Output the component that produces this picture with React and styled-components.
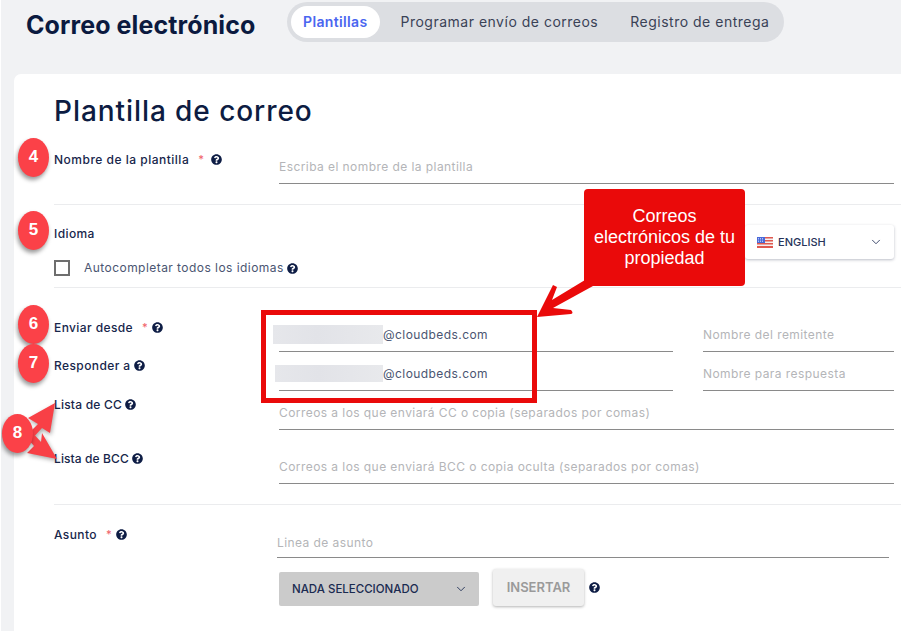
import React from "react";
import styled, { createGlobalStyle } from "styled-components";
import { FaQuestionCircle } from "react-icons/fa";
import { ChevronDown } from "lucide-react";

const GlobalStyle = createGlobalStyle`
  html, body {
    margin: 0;
    padding: 0;
    height: 631px;
    overflow: hidden;
    background: #f1f2f4;
    font-family: Inter, "Liberation Sans", sans-serif;
  }
`;

const Page = styled.div`
  position: relative;
  width: 901px;
  height: 631px;
  overflow: hidden;
  border-left: 1px solid #fff;
  box-sizing: border-box;
`;

const Header = styled.header`
  display: flex;
  align-items: flex-start;
  height: 74px;
  padding-left: 25px;
`;

const PageTitle = styled.h1`
  margin: 9px 31px 0 0;
  width: 230px;
  font-size: 25px;
  line-height: 32px;
  font-weight: 700;
  letter-spacing: 0.1px;
  color: #0b1a3f;
  white-space: nowrap;
`;

const Tabs = styled.nav`
  display: flex;
  align-items: center;
  height: 40px;
  margin-top: 2px;
  padding: 0 15px 0 4px;
  border-radius: 20px;
  background: #dcdee2;
`;

const Tab = styled.span`
  height: 32px;
  line-height: 31px;
  padding: ${(p) => (p.$active ? "0 13px 0 12px" : "0")};
  margin-left: ${(p) => p.$gap || 0}px;
  border-radius: 16px;
  font-size: 14px;
  letter-spacing: ${(p) => (p.$active ? "0.35px" : "0.5px")};
  font-weight: ${(p) => (p.$active ? 600 : 400)};
  color: ${(p) => (p.$active ? "#4a66f0" : "#3a4256")};
  background: ${(p) => (p.$active ? "#fff" : "transparent")};
  white-space: nowrap;
`;

const Card = styled.main`
  margin-left: 13px;
  height: 557px;
  padding: 17px 0 0 40px;
  box-sizing: border-box;
  background: #fff;
  border-top-left-radius: 7px;
`;

const Heading = styled.h2`
  margin: 0;
  font-size: 28px;
  line-height: 40px;
  font-weight: 500;
  color: #0d1c42;
  letter-spacing: 0.93px;
`;

const Section = styled.section`
  height: ${(p) => p.$height}px;
  padding-top: ${(p) => p.$top}px;
  box-sizing: border-box;
  border-bottom: ${(p) => (p.$last ? "none" : "1px solid #ebecee")};
`;

const Row = styled.div`
  display: grid;
  grid-template-columns: 225px 1fr;
  margin-bottom: ${(p) => p.$after || 0}px;
  padding-right: 7px;
`;

const Label = styled.label`
  display: flex;
  align-items: center;
  height: 16px;
  margin-top: ${(p) => p.$nudge || 0}px;
  font-size: 12px;
  font-weight: 500;
  letter-spacing: ${(p) => p.$spacing ?? 0.4}px;
  color: #17264b;
  white-space: nowrap;
`;

const Required = styled.span`
  margin-left: 9px;
  color: #f0626a;
  font-size: 11px;
`;

const Help = styled(FaQuestionCircle)`
  margin-left: ${(p) => p.$gap ?? 7}px;
  flex: none;
  font-size: 11px;
  color: #0e1d45;
`;

const Fields = styled.div`
  display: flex;
  gap: 30px;
  margin-left: ${(p) => p.$shift || 0}px;
  margin-right: ${(p) => p.$inset || 0}px;
`;

const Field = styled.div`
  flex: ${(p) => (p.$width ? `0 0 ${p.$width}px` : "1")};
  display: flex;
  align-items: center;
  height: 32px;
  box-sizing: border-box;
  padding: ${(p) => (p.$low ? "2px 0 0" : "0 0 2px")};
  border-bottom: 1px solid #8a8a8a;
  font-size: 12px;
  letter-spacing: 0.43px;
  color: ${(p) => (p.$filled ? "#4a5571" : "#b4b5b8")};
  white-space: nowrap;
`;

const Redacted = styled.span`
  flex: none;
  width: ${(p) => p.$width}px;
  height: ${(p) => p.$height}px;
  margin-left: ${(p) => p.$left}px;
  background: linear-gradient(90deg, #e6e7eb, #e2e3e8 40%, #e8e9ec);
`;

const IdiomaRow = styled.div`
  display: flex;
  justify-content: space-between;
  height: 35px;
  padding-right: 7px;
`;

const LangButton = styled.div`
  display: flex;
  align-items: center;
  justify-content: space-between;
  width: 149px;
  height: 34px;
  box-sizing: border-box;
  padding: 0 11px 0 12px;
  border-radius: 3px;
  background: #fff;
  box-shadow: 0 1px 3px rgba(30, 40, 70, 0.3);
  font-size: 11px;
  font-weight: 500;
  color: #27345a;
`;

const LangName = styled.span`
  display: flex;
  align-items: center;
  gap: 5px;
`;

const CheckRow = styled.div`
  display: flex;
  align-items: center;
  height: 16px;
  font-size: 12px;
  line-height: 14px;
  letter-spacing: 0.45px;
  color: #4a5571;
`;

const Checkbox = styled.span`
  width: 16px;
  height: 16px;
  margin-right: 14px;
  box-sizing: border-box;
  border: 2px solid #6e6e6e;
`;

const Toolbar = styled.div`
  display: flex;
  align-items: center;
  margin: 11px 0 0 225px;
`;

const SelectBox = styled.div`
  display: flex;
  align-items: center;
  justify-content: space-between;
  width: 200px;
  height: 34px;
  margin-top: 3px;
  padding: 0 11px 0 13px;
  box-sizing: border-box;
  border-radius: 2px;
  background: #cbcbcb;
  font-size: 11.5px;
  font-weight: 500;
  color: #1a2a50;
`;

const InsertButton = styled.button`
  width: 91px;
  height: 37px;
  margin-left: 14px;
  padding: 0 0 2px;
  border: none;
  border-radius: 3px;
  background: #f0f0f0;
  box-shadow: 0 1px 3px rgba(0, 0, 0, 0.3);
  font-family: inherit;
  font-size: 13px;
  font-weight: 600;
  color: #9a9a9a;
`;

const CalloutBox = styled.div`
  position: absolute;
  left: 583px;
  top: 189px;
  width: 161px;
  height: 97px;
  padding-top: 17px;
  box-sizing: border-box;
  border-radius: 4px;
  background: #ea0a0a;
  color: #fff;
  font-family: "Liberation Sans", Arial, sans-serif;
  font-size: 18px;
  line-height: 21px;
  text-align: center;
  white-space: nowrap;
`;

const RedFrame = styled.div`
  position: absolute;
  left: 260px;
  top: 310px;
  width: 276px;
  height: 93px;
  box-sizing: border-box;
  border: 5px solid #ea0a0a;
`;

const Badge = styled.div`
  position: absolute;
  left: ${(p) => p.$x}px;
  top: ${(p) => p.$y}px;
  width: 31px;
  height: 39px;
  border-radius: 50%;
  background: #fb4148;
  box-shadow: -1px 3px 4px rgba(0, 0, 0, 0.4);
  color: #fff;
  font-family: "Liberation Sans", Arial, sans-serif;
  font-size: 17px;
  font-weight: 700;
  line-height: 38px;
  text-align: center;
`;

const Arrows = styled.svg`
  position: absolute;
  left: -1px;
  top: 0;
  pointer-events: none;
`;

const Flag = () => (
  <svg width="16" height="11" viewBox="0 0 16 11">
    <rect width="16" height="11" fill="#f4f0f0" />
    <rect y="0" width="16" height="1.5" fill="#e0594f" />
    <rect y="3" width="16" height="1.5" fill="#e0594f" />
    <rect y="6" width="16" height="1.5" fill="#e0594f" />
    <rect y="9" width="16" height="2" fill="#e0594f" />
    <rect width="8" height="6" fill="#4a69d8" />
    <path d="M1 1.5h6M1 3h6M1 4.5h6" stroke="#dfe6ff" strokeWidth="0.7" strokeDasharray="1 1" />
  </svg>
);

export default function App() {
  return (
    <Page>
      <GlobalStyle />
      <Header>
        <PageTitle>Correo electrónico</PageTitle>
        <Tabs>
          <Tab $active>Plantillas</Tab>
          <Tab $gap={20}>Programar envío de correos</Tab>
          <Tab $gap={32}>Registro de entrega</Tab>
        </Tabs>
      </Header>

      <Card>
        <Heading>Plantilla de correo</Heading>

        <Section $height={74} $top={21}>
          <Row>
            <Label $nudge={-1} $spacing={0.5}>
              Nombre de la plantilla <Required>*</Required>
              <Help />
            </Label>
            <Field>Escriba el nombre de la plantilla</Field>
          </Row>
        </Section>

        <Section $height={83} $top={20}>
          <IdiomaRow>
            <Label>Idioma</Label>
            <LangButton>
              <LangName>
                <Flag />
                ENGLISH
              </LangName>
              <ChevronDown size={14} strokeWidth={1.5} />
            </LangButton>
          </IdiomaRow>
          <CheckRow>
            <Checkbox />
            Autocompletar todos los idiomas
            <Help $gap={3} />
          </CheckRow>
        </Section>

        <Section $height={217} $top={32}>
          <Row $after={7}>
            <Label $nudge={-1}>
              Enviar desde <Required>*</Required>
              <Help $gap={4} />
            </Label>
            <Fields>
              <Field $width={394} $filled>
                <Redacted $left={-6} $width={110} $height={19} />
                @cloudbeds.com
              </Field>
              <Field>Nombre del remitente</Field>
            </Fields>
          </Row>
          <Row $after={7}>
            <Label $nudge={-2}>
              Responder a
              <Help $gap={3} />
            </Label>
            <Fields>
              <Field $width={394} $filled>
                <Redacted $left={-4} $width={108} $height={17} />
                @cloudbeds.com
              </Field>
              <Field>Nombre para respuesta</Field>
            </Fields>
          </Row>
          <Row $after={22}>
            <Label $nudge={-2} $spacing={0.2}>
              Lista de CC
              <Help $gap={3} />
            </Label>
            <Field>Correos a los que enviará CC o copia (separados por comas)</Field>
          </Row>
          <Row>
            <Label $nudge={-2} $spacing={0.1}>
              Lista de BCC
              <Help $gap={3} />
            </Label>
            <Field>Correos a los que enviará BCC o copia oculta (separados por comas)</Field>
          </Row>
        </Section>

        <Section $height={120} $top={21} $last>
          <Row>
            <Label>
              Asunto <Required>*</Required>
              <Help $gap={4} />
            </Label>
            <Fields $shift={-2} $inset={5}>
              <Field $low>Linea de asunto</Field>
            </Fields>
          </Row>
          <Toolbar>
            <SelectBox>
              NADA SELECCIONADO
              <ChevronDown size={14} strokeWidth={1.5} />
            </SelectBox>
            <InsertButton>INSERTAR</InsertButton>
            <Help $gap={5} />
          </Toolbar>
        </Section>
      </Card>

      <RedFrame />
      <CalloutBox>
        Correos
        <br />
        electrónicos de tu
        <br />
        propiedad
      </CalloutBox>
      <Arrows width="901" height="631" viewBox="0 0 901 631">
        <path
          d="M585 280L593 286L553 308L571 310Q574 313 571 314L537 317L553 285L557 287L552 300Z"
          fill="#ea0a0a"
        />
        <g fill="#f84046" style={{ filter: "drop-shadow(1px 2px 2px rgba(0,0,0,0.35))" }}>
          <path d="M55 403L50 433L42 428L30 441L26 436L38 424L28 418Z" />
          <path d="M57 459L27 453L34 446L24 434L30 430L41 442L42 433Z" />
        </g>
      </Arrows>
      <Badge $x={17} $y={138}>4</Badge>
      <Badge $x={17} $y={211}>5</Badge>
      <Badge $x={17} $y={305}>6</Badge>
      <Badge $x={17} $y={344}>7</Badge>
      <Badge $x={1} $y={414}>8</Badge>
    </Page>
  );
}
